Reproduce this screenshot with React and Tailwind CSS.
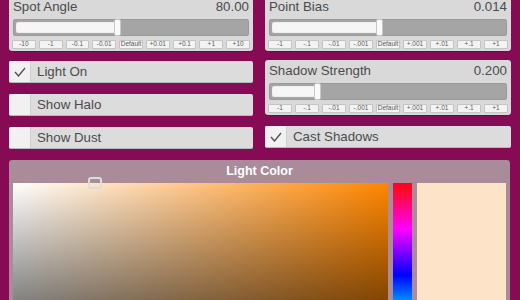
import React from 'react';

const font = { fontFamily: '"Liberation Sans", Arial, sans-serif' };

const SliderPanel = ({ title, value, pct, steps }) => (
  <div className="bg-[#d9d9d9] rounded-[3px] px-[4px] pt-[3px] pb-[2px] shadow-[0_1px_0_#6e0845]">
    <div className="flex justify-between items-center h-[16px] text-[13.3px] text-[#4b4b4b] leading-none">
      <span>{title}</span>
      <span>{value}</span>
    </div>
    <div className="mt-[4px] h-[17px] bg-[#a5a5a5] rounded-[2px] border border-[#9a9a9a] relative">
      <div
        className="absolute left-[2px] top-[2px] bottom-[2px] bg-[#f6f6f6] rounded-l-[2px] shadow-[inset_0_0_1px_#bbb]"
        style={{ width: `${pct}%` }}
      />
      <div
        className="absolute top-[-1px] bottom-[-1px] w-[7px] bg-[#fafafa] rounded-[2px] border border-[#c8c8c8]"
        style={{ left: `calc(${pct}% - 3px)` }}
      />
    </div>
    <div className="mt-[4px] grid grid-cols-9 gap-[3px] h-[9px] -mx-[1px]">
      {steps.map((s) => (
        <div
          key={s}
          className="bg-[#f3f3f3] border border-[#c4c4c4] rounded-[1px] flex items-center justify-center text-[6.5px] leading-none text-[#5a5a5a]"
        >
          {s}
        </div>
      ))}
    </div>
  </div>
);

const Toggle = ({ label, checked }) => (
  <div className="h-[22px] flex bg-[#dcdcdc] rounded-[2px] border-b border-[#b9b9b9] overflow-hidden">
    <div className="w-[22px] bg-[#f1f1f1] flex items-center justify-center border-r border-[#d0d0d0]">
      {checked && (
        <svg width="12" height="10" viewBox="0 0 12 10">
          <polyline points="1,5 4.5,9 11,1" fill="none" stroke="#555" strokeWidth="1.4" />
        </svg>
      )}
    </div>
    <div className="flex items-center pl-[6px] text-[13.3px] text-[#4b4b4b] leading-none">{label}</div>
  </div>
);

const bigSteps = ['-10', '-1', '-0.1', '-0.01', 'Default', '+0.01', '+0.1', '+1', '+10'];
const smallSteps = ['-1', '-.1', '-.01', '-.001', 'Default', '+.001', '+.01', '+.1', '+1'];

export default function App() {
  return (
    <div className="w-[520px] h-[300px] overflow-hidden bg-[#870a55]" style={font}>
      <div className="-mt-[4px] pl-[9px] pr-[9px] grid grid-cols-[244px_246px] gap-x-[12px]">
        <div className="flex flex-col">
          <SliderPanel title="Spot Angle" value="80.00" pct={44} steps={bigSteps} />
          <div className="mt-[10px]"><Toggle label="Light On" checked /></div>
          <div className="mt-[11px]"><Toggle label="Show Halo" /></div>
          <div className="mt-[11px]"><Toggle label="Show Dust" /></div>
        </div>
        <div className="flex flex-col">
          <SliderPanel title="Point Bias" value="0.014" pct={46} steps={smallSteps} />
          <div className="mt-[9px]">
            <SliderPanel title="Shadow Strength" value="0.200" pct={20} steps={smallSteps} />
          </div>
          <div className="mt-[11px]"><Toggle label="Cast Shadows" checked /></div>
        </div>
      </div>

      <div className="mt-[11px] ml-[9px] w-[501px] bg-[#a98b99] rounded-t-[3px]">
        <div className="h-[23px] flex items-center justify-center text-white font-bold text-[12.5px]">
          Light Color
        </div>
        <div className="flex px-[4px] gap-[5px]">
          <div className="relative w-[375px] h-[240px] bg-[linear-gradient(to_bottom,transparent,#000),linear-gradient(to_right,#fff,#ff8600)]">
            <div className="absolute left-[75px] top-[-6px] w-[14px] h-[12px] rounded-[3px] border-2 border-[#dcdcdc]" />
          </div>
          <div className="w-[19px] h-[276px] bg-[linear-gradient(to_bottom,#ff0020_0px,#ff0a28_8px,#ff00ff_46px,#0000ff_92px,#00ffff_138px,#00ff00_184px,#ffff00_230px,#ff0000_276px)]" />
          <div className="w-[89px] h-[240px] bg-[#fde4c8]" />
        </div>
      </div>
    </div>
  );
}
